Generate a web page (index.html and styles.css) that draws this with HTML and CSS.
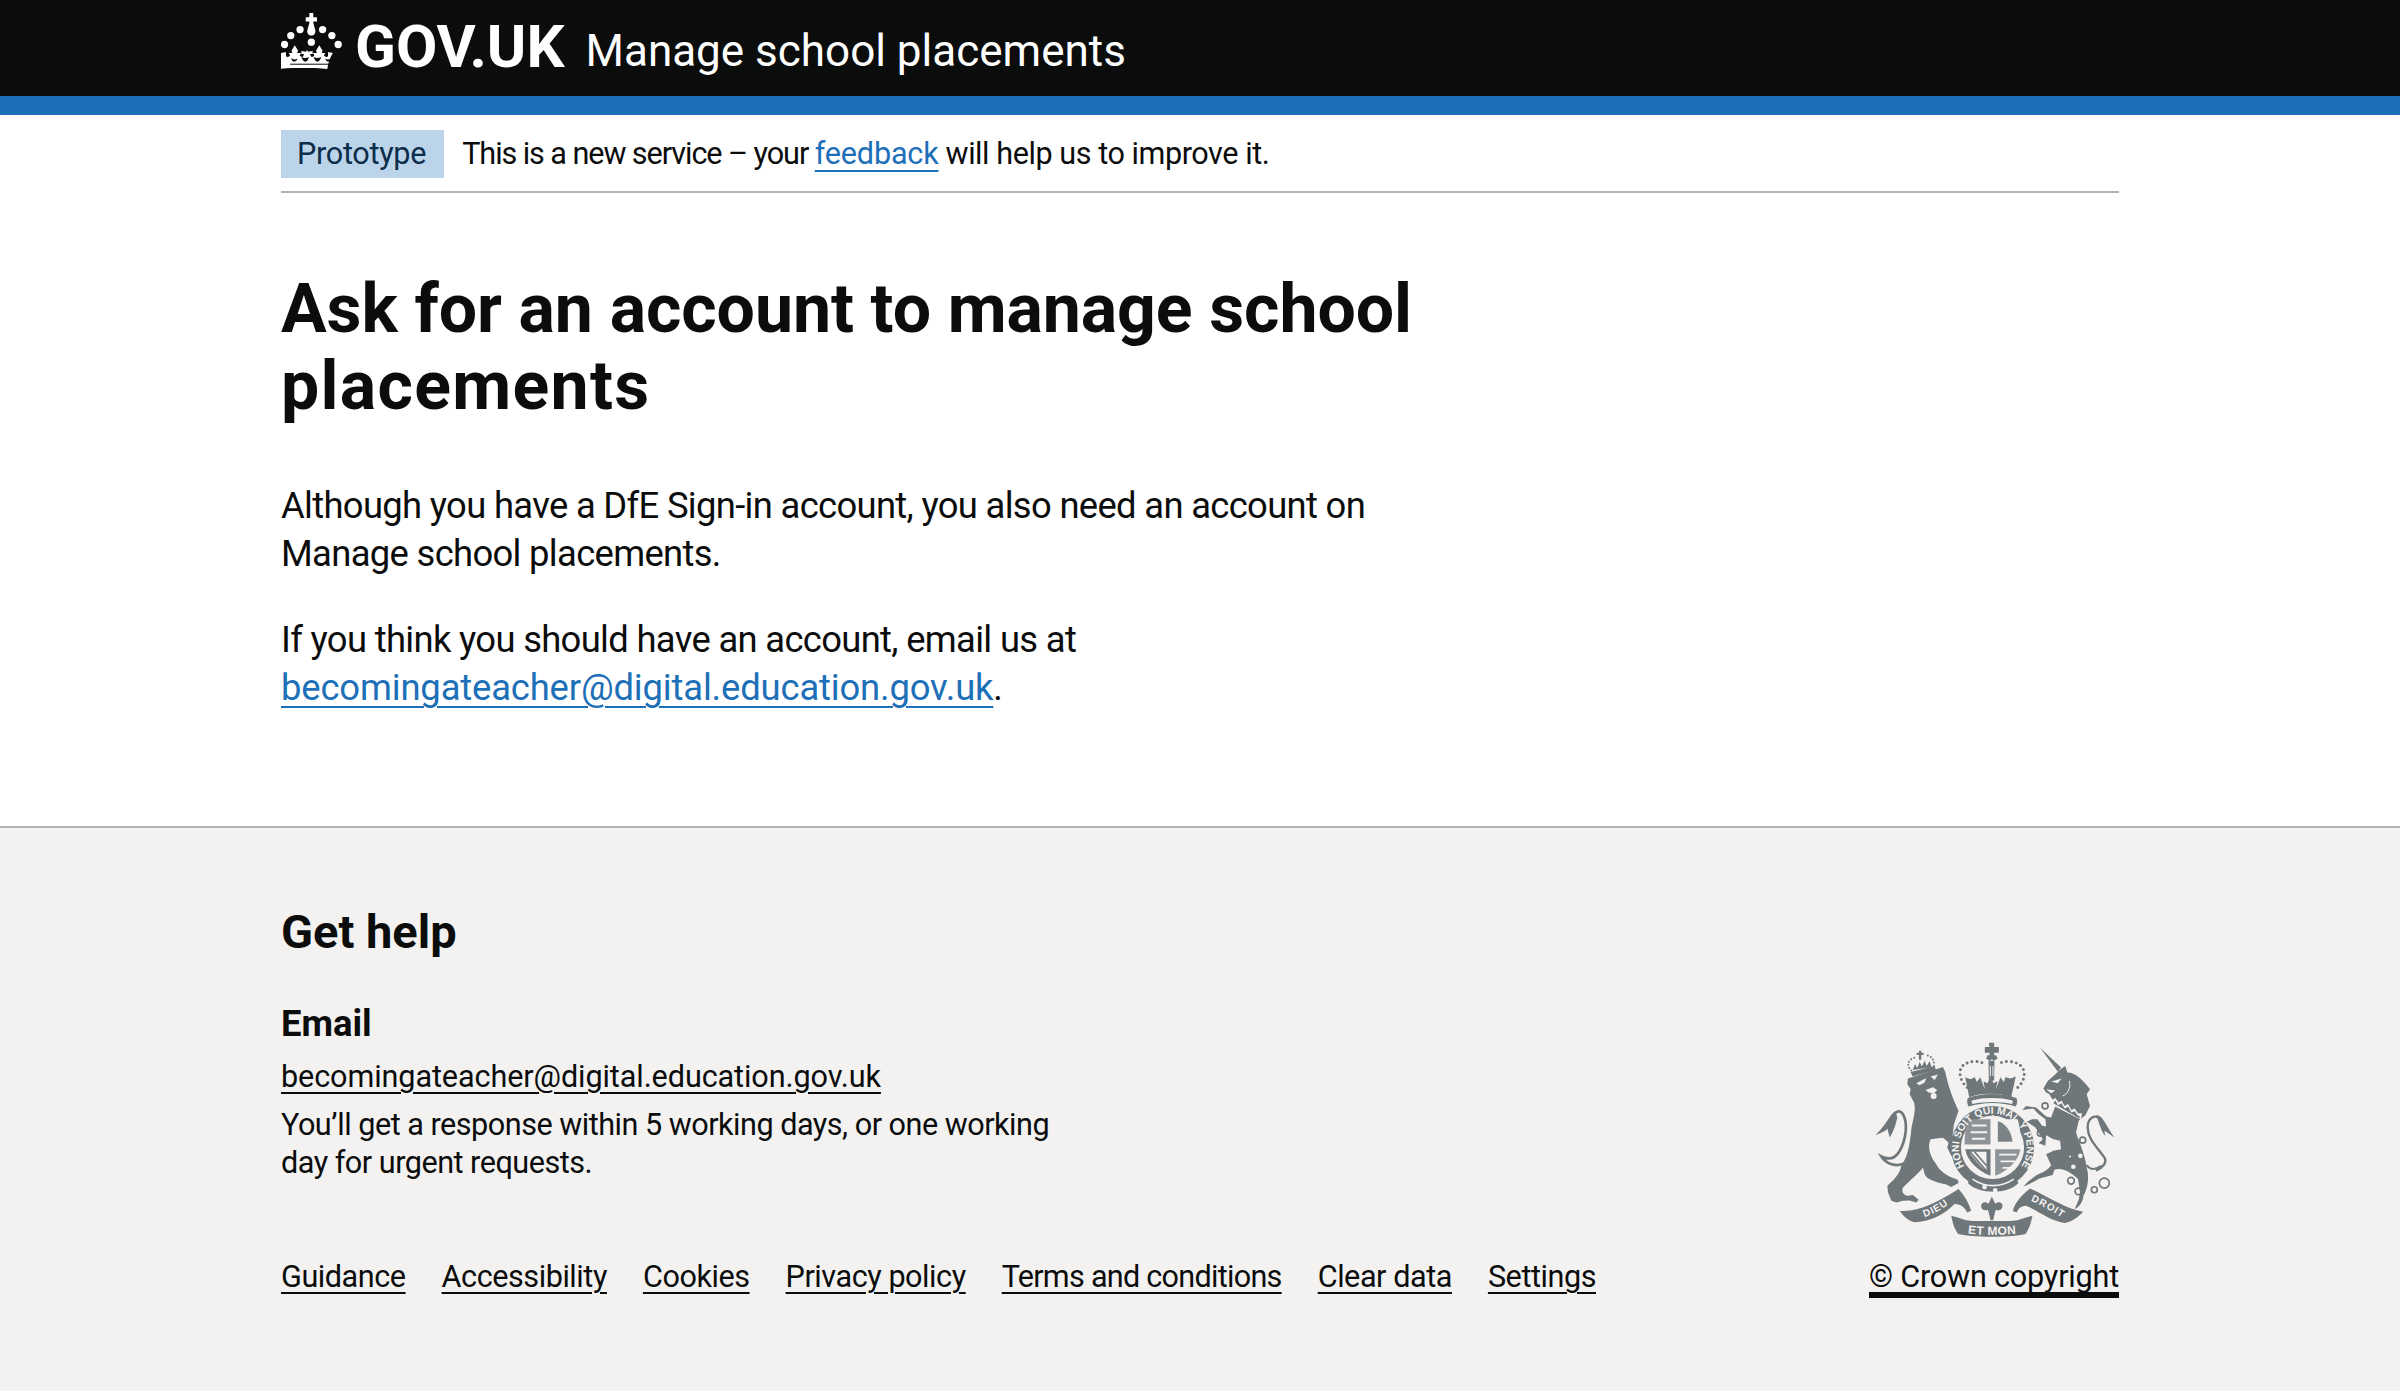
FILE: index.html
```html
<!DOCTYPE html>
<html lang="en">
<head>
<meta charset="utf-8">
<title>Ask for an account to manage school placements</title>
<link rel="stylesheet" href="styles.css">
</head>
<body>
<header class="header">
  <div class="header-inner">
    <a class="logo" href="#">
      <svg class="crown" viewBox="33 25 183 172" aria-hidden="true">
        <g fill="#fff">
          <path d="M118 25h12v13h11v13h-11v4l6 22c2 9-4 16-12 16s-14-7-12-16l6-22v-4h-11V38h11z"/>
          <circle cx="90" cy="75" r="11"/><circle cx="158" cy="75" r="11"/>
          <circle cx="62" cy="93" r="11"/><circle cx="186" cy="93" r="11"/>
          <circle cx="43" cy="120" r="11"/><circle cx="205" cy="120" r="11"/>
          <circle cx="124" cy="113" r="11"/>
          <path d="M33 146l14-3 1 13c5 3 9 1 12-3l-4-7h11l-3-7 10-17 10 17-3 7h12l-4 7c3 4 6 5 10 4l3-8h-8v-9l14 2 3-5 3 5 14-2v9h-8l3 8c4 1 7 0 10-4l-4-7h12l-3-7 10-17 10 17-3 7h11l-4 7c3 4 7 6 12 3l1-13 14 3c-8 12-13 27-17 48-22-3-50-3-72-3s-50 0-72 3c-4-21-9-36-17-48z"/>
        </g>
        <g fill="#0b0c0c">
          <path d="M62 160c6 6 14 7 20 2-2 8-8 11-14 9-2-3-4-7-6-11zM186 160c-6 6-14 7-20 2 2 8 8 11 14 9 2-3 4-7 6-11z"/>
          <path d="M94 158c8 4 16 4 23 0-3 9-6 14-11 14s-9-5-12-14zM154 158c-8 4-16 4-23 0 3 9 6 14 11 14s9-5 12-14z"/>
          <rect x="60" y="178" width="128" height="3"/>
        </g>
      </svg>
      <span class="logotype">GOV.UK</span>
    </a>
    <a class="service-name" href="#">Manage school placements</a>
  </div>
</header>

<div class="width">
  <div class="phase">
    <strong class="tag">Prototype</strong>
    <span class="phase-text"><span class="phase-lead">This is a new service – your </span><a class="link phase-link" href="#">feedback</a> will help us to improve it.</span>
  </div>

  <main class="main">
    <div class="column">
      <h1 class="title">Ask for an account to manage school <span class="title-end">placements</span></h1>
      <p class="body">Although you have a DfE Sign-in account, you also need an account on Manage school placements.</p>
      <p class="body">If you think you should have an account, email us at <a class="link body-link" href="#">becomingateacher@digital.education.gov.uk</a>.</p>
    </div>
  </main>
</div>

<footer class="footer">
  <div class="width footer-grid">
    <div class="footer-left">
      <h2 class="help-title">Get help</h2>
      <h3 class="help-sub">Email</h3>
      <p class="help-mail"><a class="foot-link" href="#">becomingateacher@digital.education.gov.uk</a></p>
      <p class="help-note">You’ll get a response within 5 working days, or one working day for urgent requests.</p>
      <ul class="meta-list">
        <li><a class="foot-link" href="#">Guidance</a></li>
        <li><a class="foot-link" href="#">Accessibility</a></li>
        <li><a class="foot-link" href="#">Cookies</a></li>
        <li><a class="foot-link" href="#">Privacy policy</a></li>
        <li><a class="foot-link foot-tight" href="#">Terms and conditions</a></li>
        <li><a class="foot-link" href="#">Clear data</a></li>
        <li><a class="foot-link" href="#">Settings</a></li>
      </ul>
    </div>
    <a class="copyright" href="#">
      <svg class="crest" viewBox="95 65 730 595" aria-hidden="true">
        <defs>
          <path id="garter" d="M398 470A102 102 0 1 1 512 470"/>
          <path id="rib-left" d="M235 598C270 590 305 570 335 545"/>
          <path id="rib-mid" d="M368 642C420 650 480 650 538 642"/>
          <path id="rib-right" d="M562 543C595 555 640 580 670 602"/>
        </defs>

        <!-- lion -->
        <g transform="translate(90 60)">
          <g fill="#6f777b">
            <path d="M110 118L150 105 215 83 222 98C228 125 238 165 262 215L248 255 244 290 268 345 240 350 228 325 232 310 215 296 195 298 178 300C168 320 175 350 195 375 205 395 225 410 260 422L262 432 240 444 225 436 205 432C185 425 165 420 160 405L155 385C145 400 120 420 95 445 90 455 95 468 110 470L125 468 142 482 135 490 115 484 95 485 75 490 60 485 50 460 48 440C70 420 85 405 90 380 110 350 115 320 120 270 125 240 135 215 128 190L115 165 118 150 108 135Z"/>
            <path d="M72 215C55 225 50 250 12 288 30 280 42 278 48 268L55 295C65 280 72 262 78 235Z"/>
            <path d="M118 98L190 80 194 92 124 112Z"/>
            <path d="M143 34h7v6h7v7h-7v14h-7V47h-7v-7h7z"/>
            <path d="M125 92l6-18 7 12 7-18 7 14 8-18 6 16 9-14 6 18z"/>
          </g>
          <g fill="none" stroke="#6f777b">
            <path stroke-width="8" d="M100 372C75 385 45 375 30 352 50 362 70 362 85 335 105 300 110 250 95 225 85 210 72 215 66 235"/>
            <path stroke-width="6" stroke-linecap="round" stroke-dasharray="0 10" d="M120 94C105 80 108 62 130 55M188 80C190 62 180 46 160 48"/>
          </g>
          <g fill="#f3f2f1">
            <path d="M135 132L165 116 160 130 145 138ZM178 112L200 106 190 122Z"/>
            <path d="M163 152L185 144 198 152 188 162 172 160Z"/>
            <circle cx="187" cy="170" r="9"/>
          </g>
        </g>

        <!-- royal crown -->
        <g fill="#6f777b">
          <path d="M443 70h16v13h14v17h-14v8h6l4 10-11 6-6-4-6 4-11-6 4-10h6v-8h-14V83h14z"/>
          <path d="M442 124h18l-1 60h-16zM448 170l9 22 12-6-5 24 14-36 10 14 5-14 15 4 16-6-14 62c-36-14-90-14-126 0l-12-60 15 6 14-6 6 14 10-14 14 36-4-24 12 6z"/>
          <path d="M380 236c44-16 102-16 146 0 4 8 2 18-2 26-44-14-98-14-142 0-4-8-6-18-2-26z"/>
        </g>
        <g fill="#f3f2f1">
          <path d="M392 244c36-10 84-10 122 0 2 4 0 8-2 10-38-8-80-8-118 0-2-2-4-6-2-10z"/>
          <path d="M446 140h3v30h-3zM454 140h3v30h-3z"/>
        </g>
        <g fill="none" stroke="#6f777b" stroke-width="9" stroke-linecap="round">
          <path stroke-dasharray="0 15" d="M378 205C350 180 340 128 404 126L436 133"/>
          <path stroke-dasharray="0 15" d="M530 205C558 180 562 128 498 126L468 133"/>
        </g>

        <!-- garter and shield -->
        <circle cx="454" cy="385" r="125" fill="#6f777b"/>
        <circle cx="454" cy="385" r="95" fill="#f3f2f1"/>
        <g fill="#8d9397">
          <path d="M380 300h68v76h-78c0-28 4-52 10-76z"/>
          <path d="M462 390h76c-6 34-36 64-76 80z"/>
        </g>
        <path d="M462 300h68c6 24 10 48 10 76h-78z" fill="#f3f2f1"/>
        <path d="M470 306c20 4 42 30 44 62h-44z" fill="#7c8387"/>
        <path d="M372 390h76v80c-40-16-70-46-76-80z" fill="#6f777b"/>
        <path d="M386 398h50v56c-24-10-44-30-50-56z" fill="#f3f2f1"/>
        <path d="M388 410l36 42M400 398l36 42M386 398l50 58" stroke="#6f777b" stroke-width="5"/>
        <g fill="#f3f2f1">
          <path d="M392 316h44v6h-44zM388 336h50v6h-50zM392 356h40v6h-40zM474 404h52v5h-52zM478 424h44v5h-44zM484 444h28v5h-28z"/>
        </g>
        <path d="M366 384h178M455 288v190" stroke="#f3f2f1" stroke-width="6"/>
        <text class="crest-ring"><textPath href="#garter" startOffset="50%" text-anchor="middle">HONI SOIT QUI MAL Y PENSE</textPath></text>
        <path d="M388 476c40 30 96 30 136 0l8 16c-16 18-44 26-76 26-30 0-60-8-76-26z" fill="#6f777b"/>
        <path d="M394 480c38 26 84 26 124 0" stroke="#f3f2f1" stroke-width="5" fill="none"/>
        <circle cx="430" cy="504" r="7" fill="#f3f2f1"/><circle cx="462" cy="514" r="7" fill="#f3f2f1"/>

        <!-- unicorn -->
        <g transform="translate(465 60)">
          <g fill="#6f777b">
            <path d="M132 25L195 85 185 97Z"/>
            <path d="M190 92L208 80 214 100C240 100 262 125 282 150L272 165 282 200 268 228 248 245 240 280C250 310 268 350 272 385 282 420 272 455 262 470 262 485 250 505 236 510L248 482 252 460 246 420 232 408C215 395 195 385 175 392L170 408 130 418 100 435 82 442C90 432 105 420 122 408 140 400 155 395 165 378L150 345 172 335 195 330 192 305 172 300 150 288 148 320 128 312 140 300 118 265 92 248 108 240 124 240 138 260 150 262 148 240 128 225 112 208 78 212 90 200 120 205 150 232 165 235 178 200 168 178C160 170 165 165 150 160L142 148 155 125 178 105Z"/>
            <path d="M300 228C320 228 325 250 355 295 340 285 335 280 325 275L328 290C318 280 312 260 305 240Z"/>
          </g>
          <g fill="none" stroke="#6f777b">
            <path stroke-width="7" d="M300 395C320 385 335 370 325 355 305 325 275 300 275 265 275 235 295 225 315 238"/>
            <path stroke-width="6" d="M272 378C285 395 300 392 315 380"/>
            <circle stroke-width="5" cx="147" cy="200" r="9"/>
            <circle stroke-width="5" cx="133" cy="282" r="9"/>
            <circle stroke-width="5" cx="260" cy="303" r="9"/>
            <circle stroke-width="5" cx="225" cy="425" r="10"/>
            <circle stroke-width="5" cx="247" cy="457" r="10"/>
            <circle stroke-width="5" cx="295" cy="452" r="9"/>
            <circle stroke-width="5" cx="325" cy="432" r="15"/>
          </g>
          <g fill="#f3f2f1">
            <path d="M168 182L178 176 188 190 196 184 206 200 216 194 226 212 236 208 246 222 258 222 255 242 165 196Z"/>
            <path d="M165 127L197 118 185 132ZM150 150L178 154 165 162Z"/>
            <circle cx="253" cy="350" r="7"/><circle cx="232" cy="383" r="7"/><circle cx="222" cy="352" r="3"/>
          </g>
          <path d="M172 192L178 184 186 198 196 192 206 208 216 202 226 220 236 216 246 230 252 232 250 238Z" fill="#6f777b"/>
          <path d="M220 125C225 145 215 165 200 170" fill="none" stroke="#f3f2f1" stroke-width="3"/>
        </g>

        <!-- ribbons and fleur -->
        <g fill="#6f777b">
          <path transform="translate(90 60)" d="M85 515C140 520 200 490 262 450 280 470 292 490 300 515L288 520C280 505 268 495 250 495 215 530 175 548 130 550 110 545 95 530 85 515Z"/>
          <path transform="translate(465 60)" d="M102 448C150 470 210 510 262 518 245 535 225 550 205 552 160 545 125 515 90 500 75 500 65 510 62 520L50 516C55 490 80 465 102 448Z"/>
          <path d="M330 590l22 6c34 12 36 10 100 10s66 2 100-10l22-6c-4 20-8 36-20 54-30 12-170 12-204 0-12-18-16-34-20-54z"/>
          <path d="M452 532l10 22c8-8 22-6 22 6 0 14-14 16-20 12l-4 14-4 18h-8l-4-18-4-14c-6 4-20 2-20-12 0-12 14-14 22-6z"/>
        </g>
        <text class="crest-rib"><textPath href="#rib-left" startOffset="50%" text-anchor="middle">DIEU</textPath></text>
        <text class="crest-rib crest-mid"><textPath href="#rib-mid" startOffset="50%" text-anchor="middle">ET MON</textPath></text>
        <text class="crest-rib"><textPath href="#rib-right" startOffset="50%" text-anchor="middle">DROIT</textPath></text>
      </svg>
      <span class="copy-text">© Crown copyright</span>
    </a>
  </div>
</footer>
</body>
</html>
```
FILE: styles.css
```css
* { box-sizing: border-box; }
html, body { margin: 0; padding: 0; }
body {
  font-family: Roboto, sans-serif;
  color: #0b0c0c;
  background: #fff;
}
.width { width: 1838px; margin: 0 auto; }

.header { background: #0b0c0c; border-bottom: 19px solid #1d70b8; height: 115px; }
.header-inner { width: 1838px; margin: 0 auto; display: flex; align-items: center; height: 96px; }
.logo { display: flex; align-items: center; color: #fff; text-decoration: none; }
.crown { width: 61px; height: 57px; margin-top: -14px; }
.logotype { font-weight: 700; font-size: 60px; line-height: 1; margin-left: 13px; margin-top: -2px; }
.service-name { color: #fff; text-decoration: none; font-size: 44px; line-height: 52px; margin-left: 21px; margin-top: 6px; }

.phase { display: flex; align-items: center; height: 78px; border-bottom: 2px solid #b1b4b6; padding-bottom: 13px; padding-top: 15px; }
.tag { background: #bbd4ea; color: #0c2d4a; font-weight: 400; font-size: 30.6px; padding: 0 18px 0 16px; height: 48px; line-height: 47px; letter-spacing: -0.3px; }
.phase-text { font-size: 30.6px; margin-left: 18px; letter-spacing: -0.45px; margin-top: -2px; }
.phase-lead { letter-spacing: -1.07px; }
.phase-link { letter-spacing: -0.2px; }
.link { color: #1d70b8; text-decoration: underline; text-decoration-thickness: 2px; text-underline-offset: 6px; }

.main { padding-top: 78px; padding-bottom: 114px; }
.column { width: 1210px; }
.title { font-size: 68px; line-height: 76.6px; font-weight: 700; margin: 0 0 58px; letter-spacing: -0.1px; }
.title-end { letter-spacing: 1.3px; }
.body { font-size: 36.4px; line-height: 47.9px; margin: 0 0 38px; letter-spacing: -0.67px; }
.body:last-child { margin-bottom: 0; }
.body-link { letter-spacing: -0.15px; }

.footer { background: #f3f2f1; border-top: 2px solid #b1b4b6; padding: 77px 0 93px; }
.footer-grid { display: flex; justify-content: space-between; align-items: flex-end; }
.help-title { font-size: 47px; line-height: 54px; margin: 0 0 41px; font-weight: 700; }
.help-sub { font-size: 36.4px; line-height: 48px; margin: 0 0 5px; font-weight: 700; }
.help-mail { font-size: 30.6px; line-height: 48px; margin: 0; letter-spacing: -0.1px; }
.help-note { font-size: 30.6px; line-height: 38.3px; margin: 5px 0 0; width: 790px; letter-spacing: -0.5px; }
.foot-link { color: #0b0c0c; text-decoration: underline; text-decoration-thickness: 2px; text-underline-offset: 5px; }
.foot-tight { letter-spacing: -0.73px; }
.meta-list { list-style: none; margin: 76px 0 0; padding: 0 0 2px; display: flex; gap: 36px; font-size: 30.6px; line-height: 38px; letter-spacing: -0.45px; }

.copyright { display: flex; flex-direction: column; align-items: center; color: #0b0c0c; text-decoration: none; font-size: 30.6px; }
.crest { width: 243px; height: 198px; margin-bottom: 23px; }
.copy-text { border-bottom: 6px solid #0b0c0c; line-height: 30px; display: block; letter-spacing: -0.2px; }
.crest-ring { font-family: "Liberation Sans", sans-serif; font-weight: 700; font-size: 31px; fill: #f3f2f1; }
.crest-rib { font-family: "Liberation Sans", sans-serif; font-weight: 700; font-size: 30px; fill: #f3f2f1; letter-spacing: 3px; }
.crest-mid { font-size: 36px; letter-spacing: 1px; }
```
